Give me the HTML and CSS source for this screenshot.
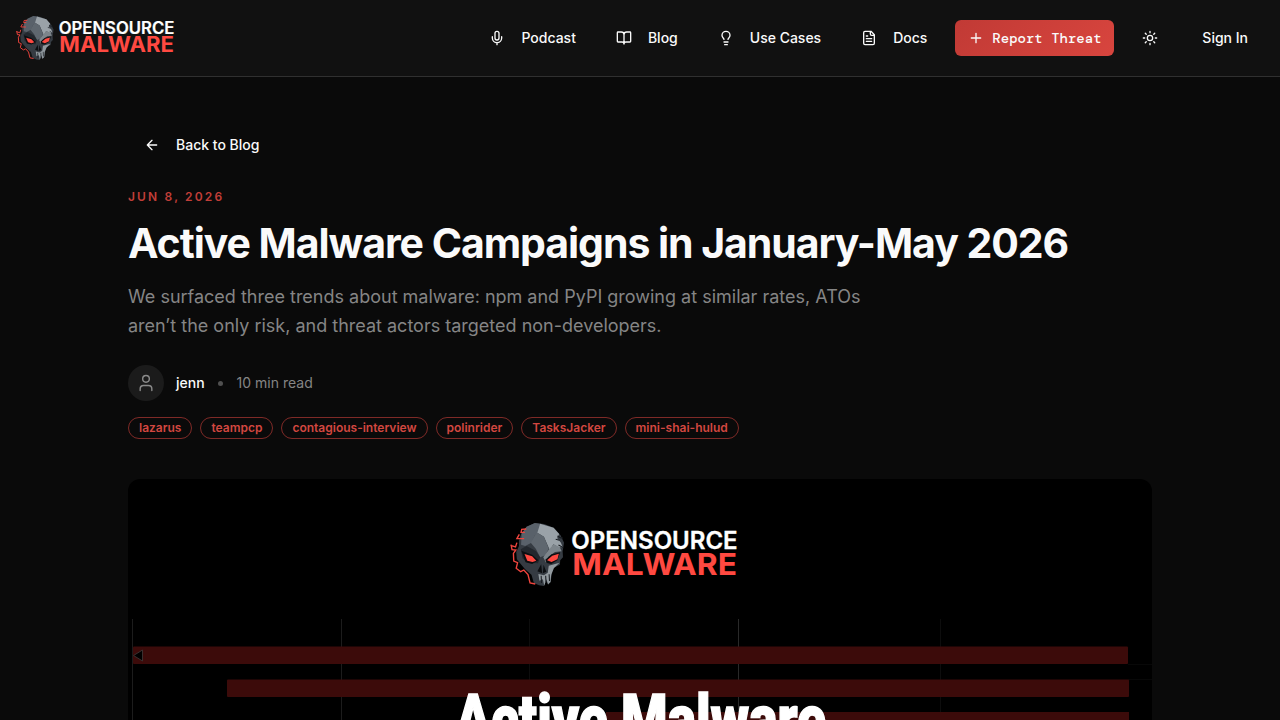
FILE: index.html
```html
<!DOCTYPE html>
<html lang="en">
<head>
<meta charset="utf-8">
<title>Active Malware Campaigns in January-May 2026</title>
<link rel="stylesheet" href="styles.css">
</head>
<body>
<svg class="defs" width="0" height="0" aria-hidden="true">
  <defs>
    <symbol id="brand" viewBox="30 30 690 210">
      <g transform="translate(-5.500 0) scale(1.040 1)">
      <path fill="#353b42" d="M66 72 82 50 106 39 133 42 160 53 180 76 190 98 186 124 187 142 179 151 178 164 158 175 154 197 151 217 144 224 138 212 132 228 118 226 103 219 96 194 77 177 62 158 54 148 52 126 60 108 60 92Z"/>
      <path fill="#59616a" d="M106 39 124 42 121 67 105 77 96 98 78 108 66 104 68 70 82 50Z"/>
      <path fill="#9aa2a8" d="M121 41 160 53 176 72 170 84 181 98 186 112 174 112 159 103 150 123 132 80 113 68Z"/>
      <path fill="#5f676f" d="M113 68 132 80 146 116 136 136 121 142 109 117 94 98 105 77Z"/>
      <path fill="#22272d" d="M65 118 82 108 109 123 121 142 115 160 86 158 70 145Z"/>
      <path fill="#7d858b" d="M146 119 160 103 178 112 183 124 164 126 145 140 138 158 130 142Z"/>
      <path fill="#0b0e11" d="M67 122 98 134 116 151 98 162 79 157ZM136 149 154 133 179 127 171 151 153 162 140 159ZM113 184 124 163 127 190ZM131 164 139 185 129 190Z"/>
      <path fill="#ff4941" d="M76 132 98 139 110 152 99 156 84 152ZM141 151 156 137 175 131 171 148 154 156Z"/>
      <path fill="#929a9f" d="M146 167 177 158 161 174 153 194 151 216 144 223 139 208 133 227 129 208 119 212 116 192 132 196 143 188Z"/>
      <path stroke="#171b20" stroke-width="3" fill="none" d="M124 197 125 219M137 197 138 217M147 193 148 213M171 78 181 84 187 84M166 88 177 91M174 105 188 113"/>
      <path stroke="#f0453e" stroke-width="4" fill="none" d="M81 57 68 58 66 67 77 67M61 73 54 86 75 86M54 98 50 111 36 106M37 104 40 119 51 120 44 130 45 153 56 158 52 175 65 185 74 180 86 194 92 219 107 222"/>
      </g>
      <text class="brand-top" x="214" y="117" textLength="499" lengthAdjust="spacingAndGlyphs">OPENSOURCE</text>
      <text class="brand-bottom" x="217" y="194" textLength="494" lengthAdjust="spacingAndGlyphs">MALWARE</text>
    </symbol>
  </defs>
</svg>

<header class="header">
  <a class="logo"><svg class="logo-art"><use href="#brand"/></svg></a>
  <nav class="nav">
    <a class="nav-link"><svg class="icon" viewBox="0 0 24 24"><path d="M12 19v3M19 10v2a7 7 0 0 1-14 0v-2"/><rect x="9" y="2" width="6" height="13" rx="3"/></svg>Podcast</a>
    <a class="nav-link"><svg class="icon" viewBox="0 0 24 24"><path d="M12 7v14M3 18a1 1 0 0 1-1-1V4a1 1 0 0 1 1-1h5a4 4 0 0 1 4 4 4 4 0 0 1 4-4h5a1 1 0 0 1 1 1v13a1 1 0 0 1-1 1h-6a3 3 0 0 0-3 3 3 3 0 0 0-3-3z"/></svg>Blog</a>
    <a class="nav-link"><svg class="icon" viewBox="0 0 24 24"><path d="M15 14c.2-1 .7-1.7 1.5-2.5 1-.9 1.5-2.2 1.5-3.5A6 6 0 0 0 6 8c0 1 .2 2.2 1.5 3.5.7.7 1.3 1.5 1.5 2.5M9 18h6M10 22h4"/></svg>Use Cases</a>
    <a class="nav-link"><svg class="icon" viewBox="0 0 24 24"><path d="M15 2H6a2 2 0 0 0-2 2v16a2 2 0 0 0 2 2h12a2 2 0 0 0 2-2V7ZM14 2v4a2 2 0 0 0 2 2h4M10 9H8M16 13H8M16 17H8"/></svg>Docs</a>
    <a class="report"><svg class="icon" viewBox="0 0 24 24"><path d="M5 12h14M12 5v14"/></svg>Report Threat</a>
    <a class="theme"><svg class="icon" viewBox="0 0 24 24"><circle cx="12" cy="12" r="4"/><path d="M12 2v2M12 20v2M4.93 4.93l1.41 1.41M17.66 17.66l1.41 1.41M2 12h2M20 12h2M6.34 17.66l-1.41 1.41M19.07 4.93l-1.41 1.41"/></svg></a>
    <a class="signin">Sign In</a>
  </nav>
</header>

<main class="article">
  <a class="back"><svg class="icon" viewBox="0 0 24 24"><path d="m12 19-7-7 7-7M19 12H5"/></svg>Back to Blog</a>
  <div class="date">JUN 8, 2026</div>
  <h1 class="title">Active Malware Campaigns in January-May 2026</h1>
  <p class="summary">We surfaced three trends about malware: npm and PyPI growing at similar rates, ATOs aren’t the only risk, and threat actors targeted non-developers.</p>
  <div class="meta">
    <span class="avatar"><svg class="icon avatar-icon" viewBox="0 0 24 24"><path d="M19 21v-2a4 4 0 0 0-4-4H9a4 4 0 0 0-4 4v2"/><circle cx="12" cy="7" r="4"/></svg></span>
    <span class="author">jenn</span>
    <span class="dot"></span>
    <span class="read">10 min read</span>
  </div>
  <div class="tags">
    <span class="tag">lazarus</span><span class="tag">teampcp</span><span class="tag">contagious-interview</span><span class="tag">polinrider</span><span class="tag">TasksJacker</span><span class="tag">mini-shai-hulud</span>
  </div>
  <figure class="cover">
    <svg class="cover-art" viewBox="0 0 1024 538">
      <rect width="1024" height="538" fill="#000"/>
      <g stroke="#1c1c1c"><path d="M4.500 140v398M213.500 140v398"/><path stroke="#0d0d0d" d="M401.500 140v398M812.500 140v398"/><path stroke="#292929" d="M610.500 140v398"/></g>
      <path stroke="#080808" d="M1000 185.500h24M1000 200.500h24"/>
      <g fill="#3c0b0a"><rect x="5" y="167.500" width="995" height="17.500" rx="1"/><rect x="99" y="200.500" width="902" height="17.500" rx="1"/><rect x="478" y="233" width="523" height="17.500"/></g>
      <path d="M5.500 176.500 14.500 171v11Z" fill="#000" stroke="#3a3030"/>
      <use href="#brand" x="382" y="41" width="230" height="70"/>
      <text class="cover-title" x="327" y="263" textLength="371" lengthAdjust="spacingAndGlyphs">Active Malware</text>
    </svg>
  </figure>
</main>
</body>
</html>
```

FILE: styles.css
```css
* { box-sizing: border-box; }
body { margin: 0; height: 720px; overflow: hidden; background: #0a0a0a; color: #fafafa; font-family: Inter, "Liberation Sans", sans-serif; font-size: 14px; line-height: 20px; }
.defs { position: absolute; }
.header { height: 77px; display: flex; align-items: center; justify-content: space-between; padding: 0 16px; background: #111; border-bottom: 1px solid #303030; }
.logo { display: flex; }
.logo-art { width: 160px; height: 48.700px; }
.brand-top { font: 600 73px Inter, sans-serif; fill: #fff; stroke: #fff; stroke-width: 1; }
.brand-bottom { font: 700 91px Inter, sans-serif; fill: #ff4941; }
.nav { display: flex; align-items: center; gap: 8px; font-weight: 500; }
.icon { width: 16px; height: 16px; flex: none; fill: none; stroke: currentColor; stroke-width: 2; stroke-linecap: round; stroke-linejoin: round; }
.nav-link, .back { height: 36px; display: flex; align-items: center; gap: 16px; padding: 0 16px; }
.report { height: 36px; width: 159px; display: flex; align-items: center; gap: 8px; padding: 0 13px; margin-left: 4px; border-radius: 6px; background: linear-gradient(135deg, #c13a35, #d8453e); font: 500 14px "DM Mono", "Liberation Mono", monospace; white-space: nowrap; }
.theme { width: 36px; height: 36px; margin-left: 10px; display: flex; align-items: center; justify-content: center; }
.signin { padding: 8px 16px; margin-left: 10px; }
.article { width: 1024px; height: 643px; overflow: hidden; margin: 0 auto; padding-top: 50px; }
.back { width: max-content; font-weight: 500; }
.date { margin-top: 24px; color: #c13e38; font-size: 12px; line-height: 20px; font-weight: 600; letter-spacing: 2.160px; }
.title { margin: 13px 0 0; font-size: 41px; line-height: 47px; font-weight: 700; letter-spacing: -1.050px; white-space: nowrap; }
.summary { width: 768px; margin: 15px 0 0; color: #858585; font-size: 18px; line-height: 29px; }
.meta { display: flex; align-items: center; gap: 12px; margin-top: 25px; }
.avatar { width: 36px; height: 36px; border-radius: 50%; display: flex; align-items: center; justify-content: center; background: #1b1b1b; color: #8a8a8a; }
.avatar-icon { width: 20px; height: 20px; stroke-width: 1.700; }
.author { font-weight: 500; }
.dot { width: 5px; height: 5px; margin: 0 2px 0 1px; border-radius: 50%; background: #505050; }
.read { color: #858585; }
.tags { display: flex; gap: 8px; margin-top: 16px; }
.tag { height: 22px; padding: 0 10px; border: 1px solid #7f2a27; border-radius: 11px; color: #d24740; font-size: 12px; line-height: 20px; font-weight: 600; }
.cover { margin: 40px 0 0; height: 538px; overflow: hidden; border-radius: 12px; }
.cover-art { display: block; width: 1024px; height: 538px; }
.cover-title { font: 900 67px Roboto, sans-serif; fill: #fff; stroke: #fff; stroke-width: 1.500; }
```
